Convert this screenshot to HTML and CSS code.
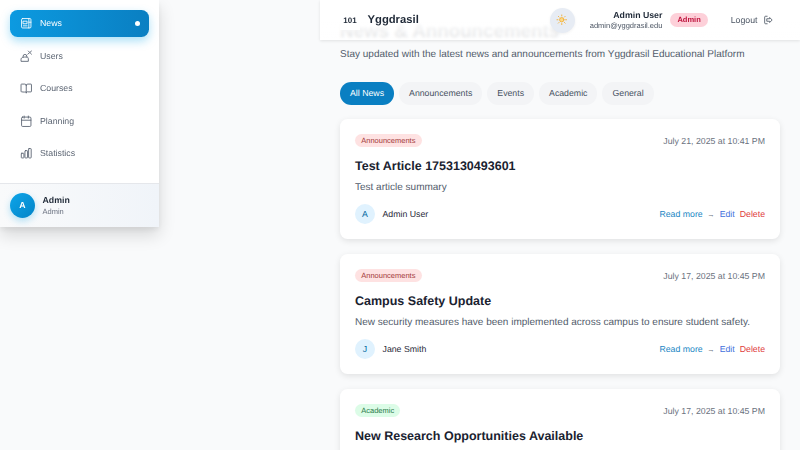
FILE: index.html
```html
<!DOCTYPE html>
<html lang="en">
<head>
<meta charset="utf-8">
<title>Yggdrasil News</title>
<link rel="stylesheet" href="styles.css">
</head>
<body>

<aside class="sidebar">
    <nav class="nav">
        <a class="nav_item active">
            <svg class="nav_icon" viewBox="0 0 24 24"><path d="M5 3h14a2 2 0 0 1 2 2v14a2 2 0 0 1-2 2H5a2 2 0 0 1-2-2V5a2 2 0 0 1 2-2Z"/><path d="M17 3v18M17 10h4M6.500 8h7v5h-7zM6.500 17h7"/></svg>
            News
            <span class="nav_dot"></span>
        </a>
        <a class="nav_item">
            <svg class="nav_icon" viewBox="0 0 24 24"><path d="M2 21v-3c0-2 1.500-3.500 3.500-4 1-.3 2.500-.5 3.500-.5h4c1.500 0 3 1 3 3V21z"/><path d="M6 13.500V12a3.500 3.500 0 0 1 7 0v1.500"/><path d="m15 8 7-6M22 8l-2-2M16 2l2 2"/></svg>
            Users
        </a>
        <a class="nav_item">
            <svg class="nav_icon" viewBox="0 0 24 24"><path d="M12 6v15"/><path d="M3 19a1 1 0 0 1-1-1V5a1 1 0 0 1 1-1h6a3 3 0 0 1 3 3 3 3 0 0 1 3-3h6a1 1 0 0 1 1 1v13a1 1 0 0 1-1 1h-6a2 2 0 0 0-3 2 2 2 0 0 0-3-2z"/></svg>
            Courses
        </a>
        <a class="nav_item">
            <svg class="nav_icon" viewBox="0 0 24 24"><path d="M8 2v4M16 2v4"/><rect x="3" y="4" width="18" height="18" rx="2"/><path d="M3 10h18"/></svg>
            Planning
        </a>
        <a class="nav_item">
            <svg class="nav_icon" viewBox="0 0 24 24"><rect x="2.500" y="12" width="5" height="9" rx="1"/><rect x="9.500" y="7" width="5" height="14" rx="1"/><rect x="16.500" y="3" width="5" height="18" rx="1"/></svg>
            Statistics
        </a>
    </nav>
    <div class="side_user">
        <div class="side_avatar">A</div>
        <div>
            <div class="side_name">Admin</div>
            <div class="side_role">Admin</div>
        </div>
    </div>
</aside>

<header class="topbar">
    <div class="logo">101</div>
    <div class="brand">Yggdrasil</div>
    <button class="theme_btn">
        <svg viewBox="0 0 24 24"><circle cx="12" cy="12" r="4.500"/><path d="M12 2v2M12 20v2M4.930 4.930l1.410 1.410M17.660 17.660l1.410 1.410M2 12h2M20 12h2M6.340 17.660l-1.410 1.410M19.070 4.930l-1.410 1.410"/></svg>
    </button>
    <div class="who">
        <div class="who_name">Admin User</div>
        <div class="who_mail">admin@yggdrasil.edu</div>
    </div>
    <span class="role_badge">Admin</span>
    <a class="logout">
        Logout
        <svg viewBox="0 0 24 24"><path d="M10 21H6a2 2 0 0 1-2-2V5a2 2 0 0 1 2-2h4"/><path d="M10 9h6V6l6 6-6 6v-3h-6z"/></svg>
    </a>
</header>

<main class="main">
    <h1>News &amp; Announcements</h1>
    <p class="lead">Stay updated with the latest news and announcements from Yggdrasil Educational Platform</p>

    <div class="tabs">
        <a class="tab on">All News</a>
        <a class="tab">Announcements</a>
        <a class="tab">Events</a>
        <a class="tab">Academic</a>
        <a class="tab">General</a>
    </div>

    <article class="card">
        <div class="card_top">
            <span class="tag red">Announcements</span>
            <span class="date">July 21, 2025 at 10:41 PM</span>
        </div>
        <h2>Test Article 1753130493601</h2>
        <p class="summary">Test article summary</p>
        <div class="card_foot">
            <span class="avatar">A</span>
            <span class="author">Admin User</span>
            <span class="links">
                <a class="read">Read more <i>→</i></a>
                <a class="edit">Edit</a>
                <a class="del">Delete</a>
            </span>
        </div>
    </article>

    <article class="card">
        <div class="card_top">
            <span class="tag red">Announcements</span>
            <span class="date">July 17, 2025 at 10:45 PM</span>
        </div>
        <h2>Campus Safety Update</h2>
        <p class="summary">New security measures have been implemented across campus to ensure student safety.</p>
        <div class="card_foot">
            <span class="avatar">J</span>
            <span class="author">Jane Smith</span>
            <span class="links">
                <a class="read">Read more <i>→</i></a>
                <a class="edit">Edit</a>
                <a class="del">Delete</a>
            </span>
        </div>
    </article>

    <article class="card">
        <div class="card_top">
            <span class="tag green">Academic</span>
            <span class="date">July 17, 2025 at 10:45 PM</span>
        </div>
        <h2>New Research Opportunities Available</h2>
    </article>
</main>

</body>
</html>
```

FILE: styles.css
```css
* {box-sizing:border-box;}
html, body {height:100%;}
body {margin:0; overflow:hidden; background:#f9fafb; color:#111827; font-family:"Liberation Sans", Arial, sans-serif; font-size:8.75px; text-rendering:geometricPrecision;}
a {text-decoration:none;}

/* sidebar floats over the page */
.sidebar {position:fixed; left:0; top:0; width:159px; height:227px; background:#fff; display:flex; flex-direction:column; box-shadow:0 8px 16px rgba(0,0,0,.14), 0 3px 6px rgba(0,0,0,.06); z-index:5;}
.nav {flex:1; padding:9.5px 10px 0; display:flex; flex-direction:column; gap:5px;}
.nav_item {display:flex; align-items:center; gap:7.5px; height:27.5px; padding:0 10px; border-radius:7.5px; color:#5b6472;}
.nav_item.active {background:linear-gradient(90deg,#0c9ae0,#0a7fc2); color:#fff; box-shadow:0 4px 10px rgba(14,165,233,.35);}
.nav_icon {width:12.5px; height:12.5px; fill:none; stroke:currentColor; stroke-width:1.7; stroke-linecap:round; stroke-linejoin:round;}
.nav_dot {width:5px; height:5px; margin-left:auto; margin-right:-1px; border-radius:50%; background:#fff;}
.side_user {height:44.5px; display:flex; align-items:center; gap:7.5px; padding:0 10px; border-top:1px solid #e5e7eb; background:linear-gradient(90deg,#f9fafb,#f0f4f9);}
.side_avatar {width:25px; height:25px; border-radius:50%; background:linear-gradient(135deg,#0ea5e9,#0284c7); color:#fff; font-weight:bold; display:flex; align-items:center; justify-content:center; box-shadow:0 3px 7px rgba(14,165,233,.3);}
.side_name {font-weight:bold; color:#1f2937; line-height:12.5px;}
.side_role {font-size:7.5px; color:#6b7280; line-height:10px;}

/* top bar, see-through towards its lower edge */
.topbar {position:fixed; left:320px; right:0; top:0; height:40px; display:flex; align-items:center; padding:0 20px; background:linear-gradient(#fff 45%, rgba(255,255,255,.88)); backdrop-filter:blur(1.5px); box-shadow:0 1px 3px rgba(0,0,0,.1); z-index:4;}
.logo {width:20px; height:20px; background:#fff; color:#1f2937; font-size:8px; font-weight:bold; display:flex; align-items:center; justify-content:center;}
.brand {margin-left:7.5px; font-size:11.25px; font-weight:bold; color:#1f2937;}
.theme_btn {margin-left:auto; width:25px; height:25px; padding:0; border:0; border-radius:50%; background:#e7ecf4; display:flex; align-items:center; justify-content:center; box-shadow:0 1px 3px rgba(0,0,0,.06);}
.theme_btn svg {width:11.5px; height:11.5px; fill:#fcd98a; stroke:#f2b23e; stroke-width:2; stroke-linecap:round;}
.who {margin-left:15px; text-align:right;}
.who_name {font-weight:bold; color:#1f2937; line-height:12.5px;}
.who_mail {font-size:7.5px; color:#4b5563; line-height:10px;}
.role_badge {margin-left:7.5px; padding:0 7.5px; height:14.5px; line-height:14.5px; border-radius:8px; background:#fdd0d9; color:#be123c; font-size:7.5px; font-weight:bold;}
.logout {margin-left:22.5px; margin-right:7.5px; display:flex; align-items:center; gap:5px; color:#4b5563;}
.logout svg {width:10px; height:10px; fill:none; stroke:currentColor; stroke-width:2; stroke-linecap:round; stroke-linejoin:round;}

/* page content */
.main {margin-left:340px; margin-right:20px; padding-top:20px;}
h1 {margin:0; font-size:18.75px; line-height:22.5px; color:#111827;}
.lead {margin:4px 0 0; font-size:10px; line-height:15px; color:#525c6b;}
.tabs {margin-top:20.500px; display:flex; gap:5px;}
.tab {height:22.5px; line-height:22.5px; padding:0 10px; border-radius:11.25px; background:#f3f4f6; color:#465161;}
.tab.on {background:#0a7fc2; color:#fff;}

.card {margin-top:15px; padding:15px; background:#fff; border-radius:7.5px; box-shadow:0 2px 6px rgba(0,0,0,.1);}
.card:first-of-type {margin-top:14.5px;}
.card_top {display:flex; justify-content:space-between; align-items:center; height:13px;}
.tag {padding:0 6.25px; height:13px; line-height:13px; border-radius:6.5px; font-size:7.5px;}
.tag.red {background:#fee2e2; color:#a33a3a;}
.tag.green {background:#dcfce7; color:#2a7a4a;}
.date {color:#6b7280;}
h2 {margin:10.5px 0 0; font-size:12.5px; line-height:17.5px; color:#1a2230;}
.summary {margin:4.5px 0 0; font-size:10px; line-height:15px; color:#525c6b;}
.card_foot {margin-top:9.5px; display:flex; align-items:center;}
.avatar {width:20px; height:20px; border-radius:50%; background:#e0f2fe; color:#0369a1; display:flex; align-items:center; justify-content:center;}
.author {margin-left:7.5px; color:#1f2937;}
.links {margin-left:auto; display:flex; gap:5px;}
.read {color:#1a86c4;}
.read i {font-style:normal; margin-left:2px; font-size:7.5px; color:#6b7280;}
.edit {color:#3f6fdc;}
.del {color:#e03c3c;}
```
